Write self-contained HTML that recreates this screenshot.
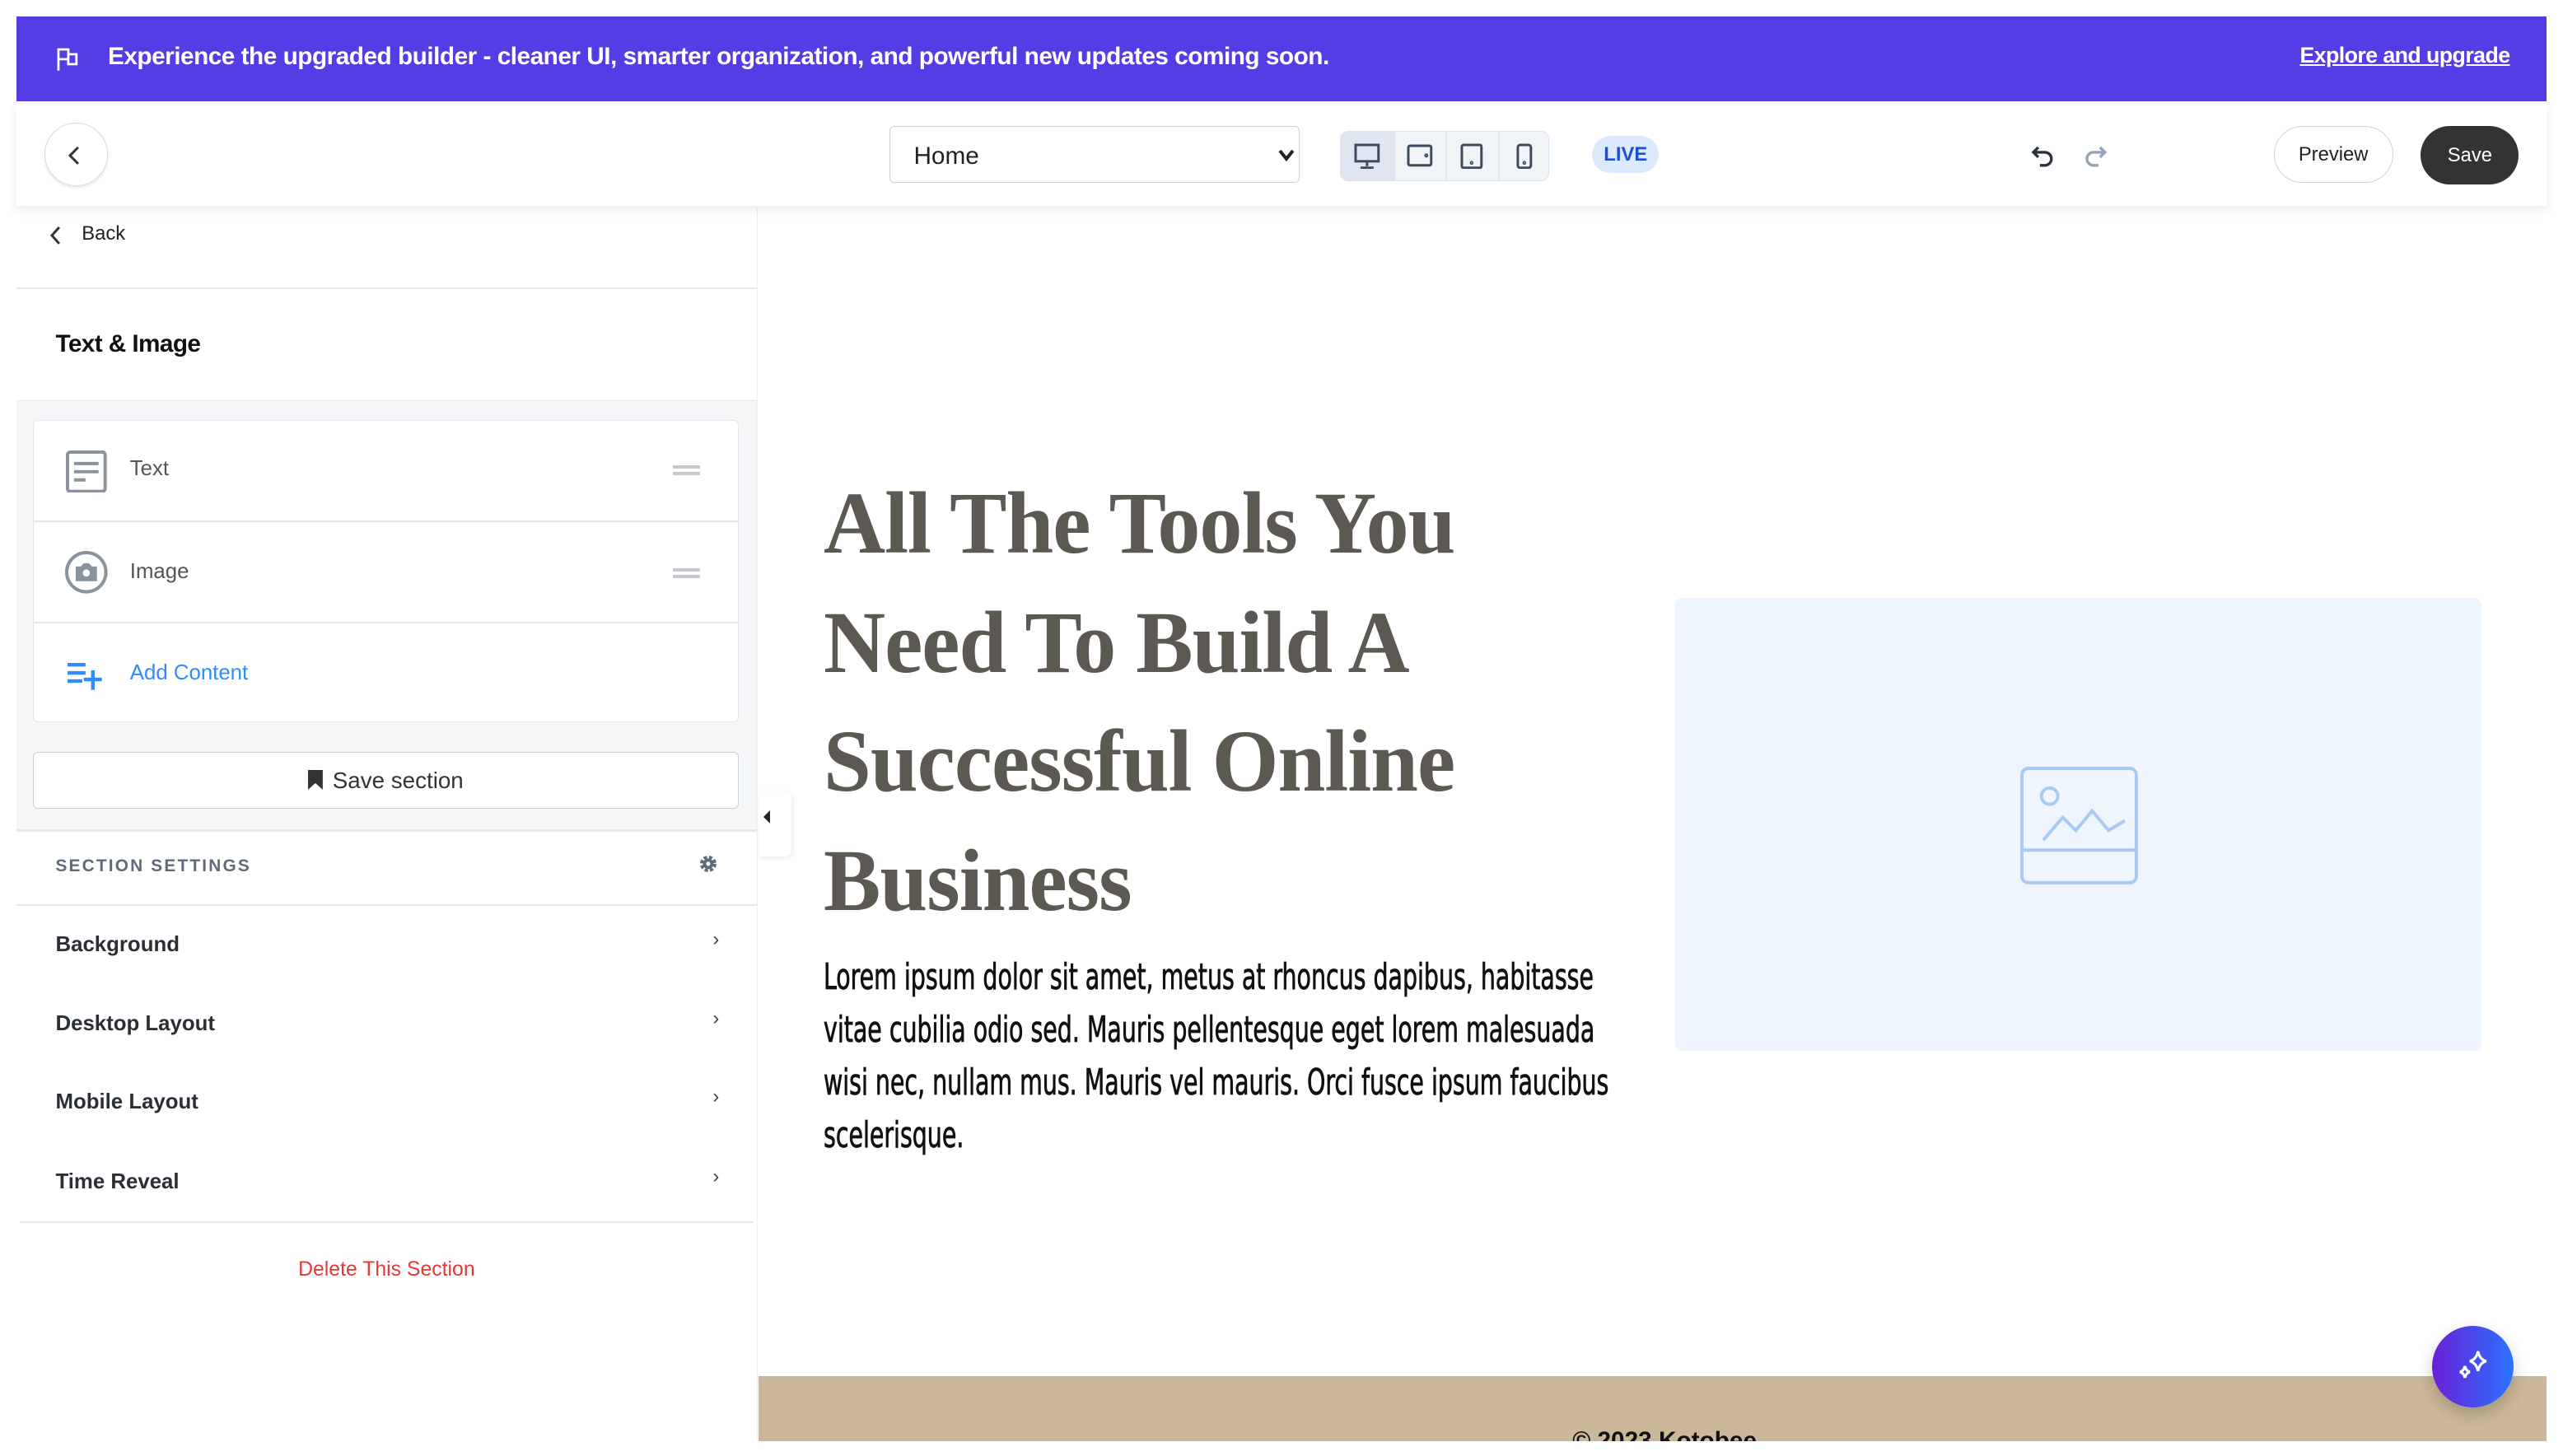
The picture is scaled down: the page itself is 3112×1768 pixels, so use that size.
<!DOCTYPE html>
<html><head><meta charset="utf-8"><style>
html,body{margin:0;padding:0;background:#fff;overflow:hidden;width:3112px;height:1768px}
#w{width:1568px;height:891px;zoom:1.98469;position:relative;font-family:"Liberation Sans",sans-serif;color:#222}
.a{position:absolute}
.banner{left:10px;top:10px;width:1548px;height:52px;background:#553de6;color:#fff}
.tb{left:10px;top:62px;width:1548px;height:64px;background:#fff;box-shadow:0 3px 6px rgba(0,0,0,.07);z-index:2}
.panel{left:10px;top:127px;width:453px;height:754px;background:#fff;border-right:1px solid #eef0f3}
.row{position:absolute;left:24px;font-size:13px;font-weight:bold;color:#2a2f36}
.chev{position:absolute;left:426px;font-size:12px;color:#444}
</style></head><body><div id="w">
<div class="a banner">
 <svg class="a" style="left:24px;top:18px" width="16" height="16" viewBox="0 0 16 16" fill="none" stroke="#fff" stroke-width="1.4"><path d="M2 15V2h6v3h5v6H8V8H2"/><path d="M8 2v6"/></svg>
 <div class="a" style="left:56px;top:16px;font-size:15px;font-weight:bold;white-space:nowrap;letter-spacing:-.25px">Experience the upgraded builder - cleaner UI, smarter organization, and powerful new updates coming soon.</div>
 <div class="a" style="left:1397px;top:16px;font-size:13.5px;font-weight:bold;text-decoration:underline;letter-spacing:-.3px">Explore and upgrade</div>
</div>
<div class="a tb">
 <div class="a" style="left:17px;top:13px;width:38px;height:38px;border:1px solid #d8d8d8;border-radius:50%;box-shadow:0 1px 2px rgba(0,0,0,.1)"></div>
 <svg class="a" style="left:31px;top:27px" width="10" height="12" viewBox="0 0 10 12"><path d="M7 1L2 6l5 5" fill="none" stroke="#333" stroke-width="1.5"/></svg>
 <div class="a" style="left:534px;top:15px;width:250px;height:34px;border:1px solid #c9d0da;border-radius:3px"></div>
 <div class="a" style="left:549px;top:25px;font-size:15px;color:#222">Home</div>
 <svg class="a" style="left:772px;top:29px" width="10" height="8" viewBox="0 0 10 8"><path d="M1 1l4 5 4-5" fill="none" stroke="#222" stroke-width="2"/></svg>
 <div class="a" style="left:810px;top:18px;width:127px;height:30px;background:#f1f4f7;border:1px solid #dfe4ea;border-radius:5px;overflow:hidden">
  <div class="a" style="left:0;top:0;width:32px;height:30px;background:#dfe6ef"></div>
  <div class="a" style="left:32px;top:0;width:1px;height:30px;background:#dfe4ea"></div>
  <div class="a" style="left:64px;top:0;width:1px;height:30px;background:#dfe4ea"></div>
  <div class="a" style="left:96px;top:0;width:1px;height:30px;background:#dfe4ea"></div>
  <svg class="a" style="left:8px;top:7px" width="16" height="16" viewBox="0 0 16 16" fill="none" stroke="#3d4a5c" stroke-width="1.5"><rect x="1" y="1" width="14" height="10"/><path d="M8 11v3M4 15h8"/></svg>
  <svg class="a" style="left:40px;top:7px" width="16" height="16" viewBox="0 0 16 16" fill="none" stroke="#3d4a5c" stroke-width="1.5"><rect x="1" y="1.5" width="14" height="12" rx="1"/><circle cx="12" cy="7.5" r=".5"/></svg>
  <svg class="a" style="left:72px;top:7px" width="16" height="16" viewBox="0 0 16 16" fill="none" stroke="#3d4a5c" stroke-width="1.5"><rect x="2" y="1" width="12" height="14" rx="1"/><circle cx="8" cy="12" r=".4"/></svg>
  <svg class="a" style="left:104px;top:7px" width="16" height="16" viewBox="0 0 16 16" fill="none" stroke="#3d4a5c" stroke-width="1.5"><rect x="4" y="1" width="8" height="14" rx="1.5"/><circle cx="8" cy="12" r=".4"/></svg>
 </div>
 <div class="a" style="left:964px;top:21px;width:41px;height:23px;border-radius:12px;background:#dbeafe;color:#1d4ed8;font-size:12px;font-weight:bold;text-align:center;line-height:23px">LIVE</div>
 <svg class="a" style="left:1232px;top:26px" width="16" height="16" viewBox="0 0 16 16" fill="none" stroke="#2a3340" stroke-width="1.7"><path d="M5 2L2 5l3 3"/><path d="M2 5h7a4 4 0 010 8H6"/></svg>
 <svg class="a" style="left:1264px;top:26px" width="16" height="16" viewBox="0 0 16 16" fill="none" stroke="#94a3b8" stroke-width="1.7"><path d="M11 2l3 3-3 3"/><path d="M14 5H7a4 4 0 000 8h3"/></svg>
 <div class="a" style="left:1381px;top:15px;width:72px;height:34px;border:1px solid #cfd2d6;border-radius:18px;font-size:12px;text-align:center;line-height:34px;color:#222">Preview</div>
 <div class="a" style="left:1471px;top:15px;width:60px;height:36px;background:#333;border-radius:18px;font-size:12px;text-align:center;line-height:36px;color:#fff">Save</div>
</div>
<div class="a panel">
 <svg class="a" style="left:20px;top:11px" width="8" height="12" viewBox="0 0 8 12"><path d="M6 1L1.5 6 6 11" fill="none" stroke="#333" stroke-width="1.5"/></svg>
 <div class="a" style="left:40px;top:9px;font-size:12px;color:#222">Back</div>
 <div class="a" style="left:0;top:49px;width:453px;height:1px;background:#e4e8ee"></div>
 <div class="a" style="left:24px;top:75px;font-size:15px;font-weight:bold;color:#111;letter-spacing:-.3px">Text &amp; Image</div>
 <div class="a" style="left:0;top:118px;width:453px;height:262px;background:#f5f6f8;border-top:1px solid #e4e8ee;border-bottom:2px solid #e4e8ee"></div>
 <div class="a" style="left:10px;top:130px;width:431px;height:184px;background:#fff;border:1px solid #e3e6ea;border-radius:3px">
  <div class="a" style="left:0;top:61px;width:431px;height:1px;background:#e3e6ea"></div>
  <div class="a" style="left:0;top:123px;width:431px;height:1px;background:#e3e6ea"></div>
  <svg class="a" style="left:20px;top:18px" width="26" height="26" viewBox="0 0 26 26" fill="none" stroke="#8a929c" stroke-width="2"><rect x="1" y="1" width="23" height="24" rx="1.5"/><path d="M5 8h15M5 13h15M5 18h7"/></svg>
  <div class="a" style="left:59px;top:22px;font-size:13px;color:#555">Text</div>
  <div class="a" style="left:391px;top:27px;width:17px;height:2px;background:#c5c9ce;box-shadow:0 4px 0 #c5c9ce"></div>
  <svg class="a" style="left:19px;top:79px" width="27" height="27" viewBox="0 0 27 27"><circle cx="13.5" cy="13.5" r="12" fill="none" stroke="#8a929c" stroke-width="2"/><path d="M7 10h3l2-2h3l2 2h3v9H7z" fill="#8a929c"/><circle cx="13.5" cy="14" r="2.2" fill="#fff"/></svg>
  <div class="a" style="left:59px;top:85px;font-size:13px;color:#555">Image</div>
  <div class="a" style="left:391px;top:90px;width:17px;height:2px;background:#c5c9ce;box-shadow:0 4px 0 #c5c9ce"></div>
  <svg class="a" style="left:21px;top:148px" width="22" height="18" viewBox="0 0 22 18" fill="#2d8cff"><rect x="0" y="0" width="11" height="2.2"/><rect x="0" y="5" width="11" height="2.2"/><rect x="0" y="10" width="9" height="2.2"/><rect x="10" y="9" width="11" height="2.2"/><rect x="14.4" y="4.5" width="2.2" height="12"/></svg>
  <div class="a" style="left:59px;top:147px;font-size:13px;color:#2d8cff">Add Content</div>
 </div>
 <div class="a" style="left:10px;top:333px;width:431px;height:34px;background:#fff;border:1px solid #c9ced6;border-radius:3px;text-align:center;line-height:34px;font-size:14px;color:#333"><svg width="9" height="12" viewBox="0 0 9 12" style="vertical-align:-1px;margin-right:6px"><path d="M0 0h9v12L4.5 8 0 12z" fill="#333"/></svg>Save section</div>
 <div class="a" style="left:24px;top:397px;font-size:10.5px;font-weight:bold;letter-spacing:1.1px;color:#5f6b7a">SECTION SETTINGS</div>
 <svg class="a" style="left:418px;top:396px" width="11" height="11" viewBox="0 0 12 12"><circle cx="6" cy="6" r="4" fill="none" stroke="#5f6b7a" stroke-width="3" stroke-dasharray="2 1.2"/><circle cx="6" cy="6" r="3.5" fill="#5f6b7a"/><circle cx="6" cy="6" r="1.4" fill="#fff"/></svg>
 <div class="a" style="left:0;top:426px;width:453px;height:1px;background:#e4e8ee"></div>
 <div class="row" style="top:444px">Background</div><div class="chev" style="top:441px">›</div>
 <div class="row" style="top:492px">Desktop Layout</div><div class="chev" style="top:489px">›</div>
 <div class="row" style="top:540px">Mobile Layout</div><div class="chev" style="top:537px">›</div>
 <div class="row" style="top:589px">Time Reveal</div><div class="chev" style="top:586px">›</div>
 <div class="a" style="left:2px;top:620px;width:449px;height:1px;background:#e4e8ee"></div>
 <div class="a" style="left:0;top:643px;width:453px;text-align:center;font-size:12.5px;color:#e53935">Delete This Section</div>
</div>
<div class="a" style="left:464px;top:484px;width:20px;height:40px;background:#fff;border-radius:0 4px 4px 0;box-shadow:1px 1px 3px rgba(0,0,0,.08)"></div>
<svg class="a" style="left:467px;top:496px" width="5" height="8" viewBox="0 0 5 8"><path d="M4 0v8L0 4z" fill="#222"/></svg>
<div class="a" style="left:504px;top:284px;font-family:'Liberation Serif',serif;font-weight:bold;font-size:54px;line-height:73px;color:#5c5852;white-space:nowrap;transform:scaleX(.97);transform-origin:0 0;letter-spacing:-.5px">All The Tools You<br>Need To Build A<br>Successful Online<br>Business</div>
<div class="a" style="left:504px;top:582px;font-family:'DejaVu Sans Condensed','Liberation Sans',sans-serif;font-size:22px;line-height:32.3px;color:#111;white-space:nowrap;transform:scaleX(.724);transform-origin:0 0;-webkit-text-stroke:.4px #111">Lorem ipsum dolor sit amet, metus at rhoncus dapibus, habitasse<br>vitae cubilia odio sed. Mauris pellentesque eget lorem malesuada<br>wisi nec, nullam mus. Mauris vel mauris. Orci fusce ipsum faucibus<br>scelerisque.</div>
<div class="a" style="left:1025px;top:366px;width:493px;height:277px;background:#eff5fd;border-radius:4px"></div>
<svg class="a" style="left:1236px;top:469px" width="72" height="72" viewBox="0 0 72 72" fill="none" stroke="#a9cbf3" stroke-width="2"><rect x="1" y="1" width="70" height="70" rx="4"/><path d="M1 51h70"/><circle cx="18" cy="18" r="5"/><path d="M14 45l12-14 8 8 10-12 10 12 10-6"/></svg>
<div class="a" style="left:464px;top:842px;width:1094px;height:40px;background:#cbb89a;overflow:hidden"><div class="a" style="left:498px;top:31px;font-size:15px;font-weight:bold;color:#111">© 2023 Kotobee</div></div>
<div class="a" style="left:1488px;top:811px;width:50px;height:50px;border-radius:50%;background:linear-gradient(90deg,#6a1fd6,#2a73ff);box-shadow:0 4px 10px rgba(0,0,0,.2)"></div>
<svg class="a" style="left:1502px;top:825px" width="22" height="22" viewBox="0 0 22 22" fill="none" stroke="#fff" stroke-width="1.6"><path d="M14 2q1 5 5 6q-4 1-5 6q-1-5-5-6q4-1 5-6z"/><path d="M6 11q.6 3 3 3.6q-2.4.6-3 3.6q-.6-3-3-3.6q2.4-.6 3-3.6z"/></svg>
</div></body></html>
